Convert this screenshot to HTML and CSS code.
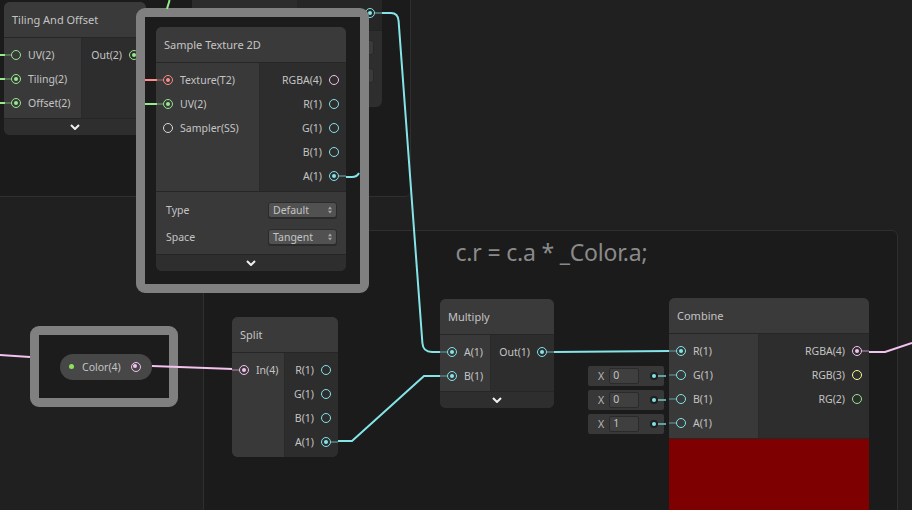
FILE: index.html
```html
<!DOCTYPE html>
<html>
<head>
<meta charset="utf-8">
<link rel="stylesheet" href="styles.css">
</head>
<body>
<div class="canvas">
  <div class="group group-a"></div>
  <div class="group group-b"><div class="group-title">c.r = c.a * _Color.a;</div></div>

  <div class="node node-hidden">
    <div class="hid-body">
      <div class="hid-in"></div>
      <div class="hid-out">
        <div class="row out-row"><span class="port on cyan stub"></span></div>
      </div>
    </div>
    <div class="hid-settings">
      <span class="hid-dd"></span>
      <span class="hid-dd"></span>
    </div>
  </div>

  <div class="node node-tiling">
    <div class="node-title">Tiling And Offset</div>
    <div class="node-body">
      <div class="node-in w-78">
        <div class="row"><span class="port green stub"></span><span>UV(2)</span></div>
        <div class="row"><span class="port on green stub"></span><span>Tiling(2)</span></div>
        <div class="row"><span class="port on green stub"></span><span>Offset(2)</span></div>
      </div>
      <div class="node-out">
        <div class="row"><span>Out(2)</span><span class="port on green stub"></span></div>
      </div>
    </div>
    <div class="node-foot"><svg class="chev" viewBox="0 0 10 6"><polyline points="1,1 5,5 9,1"/></svg></div>
  </div>

  <div class="select-frame frame-sample">
    <div class="node node-sample">
      <div class="node-title">Sample Texture 2D</div>
      <div class="node-body">
        <div class="node-in w-104">
          <div class="row"><span class="port on red stub"></span><span>Texture(T2)</span></div>
          <div class="row"><span class="port on green stub"></span><span>UV(2)</span></div>
          <div class="row"><span class="port white"></span><span>Sampler(SS)</span></div>
        </div>
        <div class="node-out">
          <div class="row"><span>RGBA(4)</span><span class="port pink"></span></div>
          <div class="row"><span>R(1)</span><span class="port cyan"></span></div>
          <div class="row"><span>G(1)</span><span class="port cyan"></span></div>
          <div class="row"><span>B(1)</span><span class="port cyan"></span></div>
          <div class="row"><span>A(1)</span><span class="port on cyan stub"></span></div>
        </div>
      </div>
      <div class="node-settings">
        <div class="setting"><span>Type</span><span class="dropdown"><span>Default</span><svg class="updown" viewBox="0 0 5 9"><polygon points="2.5,0 5,3.5 0,3.5"/><polygon points="0,5.5 5,5.5 2.5,9"/></svg></span></div>
        <div class="setting"><span>Space</span><span class="dropdown"><span>Tangent</span><svg class="updown" viewBox="0 0 5 9"><polygon points="2.5,0 5,3.5 0,3.5"/><polygon points="0,5.5 5,5.5 2.5,9"/></svg></span></div>
      </div>
      <div class="node-foot"><svg class="chev" viewBox="0 0 10 6"><polyline points="1,1 5,5 9,1"/></svg></div>
    </div>
  </div>

  <div class="select-frame frame-color">
    <div class="prop-pill">
      <span class="prop-dot"></span>
      <span class="prop-label">Color(4)</span>
      <span class="port on pink"></span>
    </div>
  </div>

  <svg class="wires" width="912" height="510" viewBox="0 0 912 510">
    <g class="w-green">
      <path d="M0 55 H5"/><path d="M0 79 H5"/><path d="M0 103 H5"/>
      <path d="M167 9 C168 5 169 3 169.5 0"/>
      <path d="M145 104 H157"/>
    </g>
    <g class="w-red"><path d="M145 80 H157"/></g>
    <g class="w-cyan">
      <path d="M346 177 H352 Q357 177 359 173"/>
      <path d="M382 13 H391 Q398 13 398.6 21 L422.4 343 Q423 352 432 352 H441"/>
      <path d="M338 441 H352 L424 376 H441"/>
      <path d="M554 352 L670 351"/>
    </g>
    <g class="w-pink">
      <path d="M0 355 L30 357"/>
      <path d="M152 366 L233 369"/>
      <path d="M869 352 H885 L912 343"/>
    </g>
  </svg>

  <div class="node node-split">
    <div class="node-title">Split</div>
    <div class="node-body">
      <div class="node-in w-53">
        <div class="row"><span class="port on pink stub"></span><span>In(4)</span></div>
      </div>
      <div class="node-out">
        <div class="row"><span>R(1)</span><span class="port cyan"></span></div>
        <div class="row"><span>G(1)</span><span class="port cyan"></span></div>
        <div class="row"><span>B(1)</span><span class="port cyan"></span></div>
        <div class="row"><span>A(1)</span><span class="port on cyan stub"></span></div>
      </div>
    </div>
  </div>

  <div class="node node-multiply">
    <div class="node-title">Multiply</div>
    <div class="node-body">
      <div class="node-in w-51">
        <div class="row"><span class="port on cyan stub"></span><span>A(1)</span></div>
        <div class="row"><span class="port on cyan stub"></span><span>B(1)</span></div>
      </div>
      <div class="node-out">
        <div class="row"><span>Out(1)</span><span class="port on cyan stub"></span></div>
      </div>
    </div>
    <div class="node-foot"><svg class="chev" viewBox="0 0 10 6"><polyline points="1,1 5,5 9,1"/></svg></div>
  </div>

  <div class="inline-fields">
    <div class="if-box"><span class="if-x">X</span><span class="if-input">0</span><span class="if-dot"></span></div>
    <div class="if-box"><span class="if-x">X</span><span class="if-input">0</span><span class="if-dot"></span></div>
    <div class="if-box"><span class="if-x">X</span><span class="if-input">1</span><span class="if-dot"></span></div>
  </div>

  <div class="node node-combine">
    <div class="node-title">Combine</div>
    <div class="node-body">
      <div class="node-in w-90">
        <div class="row"><span class="port on cyan stub"></span><span>R(1)</span></div>
        <div class="row"><span class="port cyan stub"></span><span>G(1)</span></div>
        <div class="row"><span class="port cyan stub"></span><span>B(1)</span></div>
        <div class="row"><span class="port cyan stub"></span><span>A(1)</span></div>
      </div>
      <div class="node-out">
        <div class="row"><span>RGBA(4)</span><span class="port on pink stub"></span></div>
        <div class="row"><span>RGB(3)</span><span class="port yellow"></span></div>
        <div class="row"><span>RG(2)</span><span class="port green"></span></div>
      </div>
    </div>
    <div class="preview"></div>
  </div>
</div>
</body>
</html>
```

FILE: styles.css
```css
html, body {
  margin: 0;
  padding: 0;
  background: #202020;
}

.canvas {
  position: relative;
  width: 912px;
  height: 510px;
  overflow: hidden;
  background: #202020;
  font-family: "Noto Sans", "Open Sans", sans-serif;
  color: #c4c4c4;
  font-size: 10.5px;
}

.group {
  position: absolute;
  box-sizing: border-box;
  background: #1b1b1b;
  border: 1px solid #2f2f2f;
  border-radius: 6px;
}
.group-a {
  left: -10px;
  top: -10px;
  width: 421px;
  height: 207px;
}
.group-b {
  left: 203px;
  top: 230px;
  width: 695px;
  height: 300px;
}
.group-title {
  text-align: center;
  font-size: 23px;
  line-height: 30px;
  color: #8a8a8a;
  padding-top: 6px;
  padding-left: 2px;
  letter-spacing: -0.2px;
}

.node {
  position: absolute;
  border-radius: 6px;
  overflow: hidden;
  background: #393939;
  display: flex;
  flex-direction: column;
}
.node-title {
  height: 35px;
  border-bottom: 1px solid #262626;
  display: flex;
  align-items: center;
  padding-left: 8px;
  font-size: 11px;
  color: #c4c4c4;
  background: #3a3a3a;
}
.node-body {
  display: flex;
}
.node-in {
  background: #393939;
  padding: 5px 0 3px;
  flex: none;
}
.node-out {
  background: #2d2d2d;
  flex: 1;
  padding: 5px 0 3px;
  border-left: 1px solid #2a2a2a;
}
.w-78 { width: 77px; }
.w-104 { width: 103px; }
.w-53 { width: 52px; }
.w-51 { width: 50px; }
.w-90 { width: 89px; }

.row {
  height: 24px;
  display: flex;
  align-items: center;
  gap: 7px;
  white-space: nowrap;
}
.node-in .row {
  padding-left: 7px;
}
.node-out .row {
  justify-content: flex-end;
  padding-right: 7px;
}

.node-foot {
  height: 16px;
  border-top: 1px solid #262626;
  background: #2e2e2e;
  display: flex;
  align-items: center;
  justify-content: center;
}
.chev {
  width: 10px;
  height: 6px;
}
.chev polyline {
  fill: none;
  stroke: #f0f0f0;
  stroke-width: 2;
}

.port {
  --c: #84e4e7;
  width: 10px;
  height: 10px;
  box-sizing: border-box;
  border: 1.5px solid var(--c);
  border-radius: 50%;
  position: relative;
  flex: none;
}
.port.on::after {
  content: "";
  position: absolute;
  left: 1.5px;
  top: 1.5px;
  width: 4px;
  height: 4px;
  border-radius: 50%;
  background: var(--c);
}
.port.stub::before {
  content: "";
  position: absolute;
  top: 2.5px;
  width: 7px;
  height: 2px;
  background: color-mix(in srgb, var(--c) 30%, #3a3a3a);
}
.node-in .port.stub::before { right: 100%; margin-right: 1px; }
.node-out .port.stub::before { left: 100%; margin-left: 1px; }

.cyan { --c: #84e4e7; }
.green { --c: #97e88e; }
.pink { --c: #f4c2ee; }
.red { --c: #ff8b8b; }
.yellow { --c: #f6ff9a; }
.white { --c: #d8d8d8; }

.node-hidden {
  left: 192px;
  top: -40px;
  width: 190px;
  height: 147px;
  background: #2e2e2e;
}
.hid-body {
  display: flex;
  height: 70px;
  border-bottom: 1px solid #232323;
}
.hid-in {
  width: 105px;
  background: #2c2c2c;
}
.hid-out {
  flex: 1;
  background: #262626;
  display: flex;
  flex-direction: column;
  justify-content: flex-end;
  padding-bottom: 5px;
}
.hid-out .row {
  justify-content: flex-end;
  padding-right: 7px;
}
.hid-out .port.stub::before { left: 100%; margin-left: 1px; }
.hid-settings {
  display: flex;
  flex-direction: column;
  align-items: flex-end;
  gap: 13px;
  padding: 9px 8px 0 0;
}
.hid-dd {
  width: 60px;
  height: 13px;
  border-radius: 3px;
  background: #3a3a3a;
  border: 1px solid #282828;
}

.select-frame {
  position: absolute;
  box-sizing: border-box;
  border: 9px solid #808080;
  border-radius: 9px;
  background: #1c1c1c;
}
.frame-sample {
  left: 136px;
  top: 8px;
  width: 233px;
  height: 285px;
  padding: 10px 0 0 11px;
}
.frame-sample .node {
  position: static;
}
.node-sample {
  width: 190px;
}
.node-settings {
  border-top: 1px solid #262626;
  background: #393939;
  padding: 4px 0 4px;
}
.setting {
  height: 27px;
  display: flex;
  align-items: center;
  justify-content: space-between;
  padding: 0 9px 0 10px;
}
.dropdown {
  width: 69px;
  height: 16px;
  box-sizing: border-box;
  background: #515151;
  border: 1px solid #2b2b2b;
  border-radius: 3px;
  display: flex;
  align-items: center;
  justify-content: space-between;
  padding: 0 4px 0 4px;
  font-size: 10.5px;
  box-shadow: 0 1px 0 #2a2a2a;
}
.updown {
  width: 4px;
  height: 8px;
}
.updown polygon {
  fill: #a8a8a8;
}

.frame-color {
  left: 30px;
  top: 326px;
  width: 148px;
  height: 81px;
  display: flex;
  align-items: center;
  justify-content: center;
  padding-left: 4px;
}
.prop-pill {
  width: 92px;
  height: 26px;
  box-sizing: border-box;
  border-radius: 13px;
  background: #474747;
  display: flex;
  align-items: center;
  padding-left: 9px;
}
.prop-dot {
  width: 5px;
  height: 5px;
  border-radius: 50%;
  background: #8fe05c;
  flex: none;
}
.prop-label {
  margin-left: 8px;
  margin-right: 10px;
  color: #c4c4c4;
}

.wires {
  position: absolute;
  left: 0;
  top: 0;
  pointer-events: none;
}
.wires path {
  fill: none;
  stroke-width: 2;
}
.w-green path { stroke: #97e88e; }
.w-red path { stroke: #ff8b8b; }
.w-cyan path { stroke: #84e4e7; }
.w-pink path { stroke: #f4c2ee; }

.node-tiling {
  left: 4px;
  top: 2px;
  width: 142px;
}
.node-split {
  left: 232px;
  top: 317px;
  width: 106px;
}
.node-multiply {
  left: 440px;
  top: 299px;
  width: 114px;
}
.node-combine {
  left: 669px;
  top: 298px;
  width: 200px;
}
.preview {
  height: 80px;
  background: #7f0000;
  border-top: 1px solid #262626;
}

.inline-fields {
  position: absolute;
  left: 588px;
  top: 366px;
  display: flex;
  flex-direction: column;
  gap: 4px;
}
.if-box {
  width: 76px;
  height: 20px;
  box-sizing: border-box;
  background: #383838;
  border-radius: 2px;
  display: flex;
  align-items: center;
  padding-left: 10px;
  position: relative;
}
.if-x {
  color: #b8b8b8;
  font-size: 10.5px;
}
.if-input {
  margin-left: 5px;
  width: 30px;
  height: 16px;
  box-sizing: border-box;
  background: #3f3f3f;
  border: 1px solid #2a2a2a;
  border-radius: 2px;
  padding-left: 3px;
  line-height: 13px;
  font-size: 10.5px;
  color: #c4c4c4;
}
.if-dot {
  margin-left: auto;
  margin-right: 6px;
  width: 8px;
  height: 8px;
  box-sizing: border-box;
  border-radius: 50%;
  background: #84e4e7;
  border: 2px solid #1e1e1e;
  position: relative;
}
.if-dot::after {
  content: "";
  position: absolute;
  left: 6px;
  top: 1px;
  width: 8px;
  height: 2px;
  background: #5fa3a6;
}
```
